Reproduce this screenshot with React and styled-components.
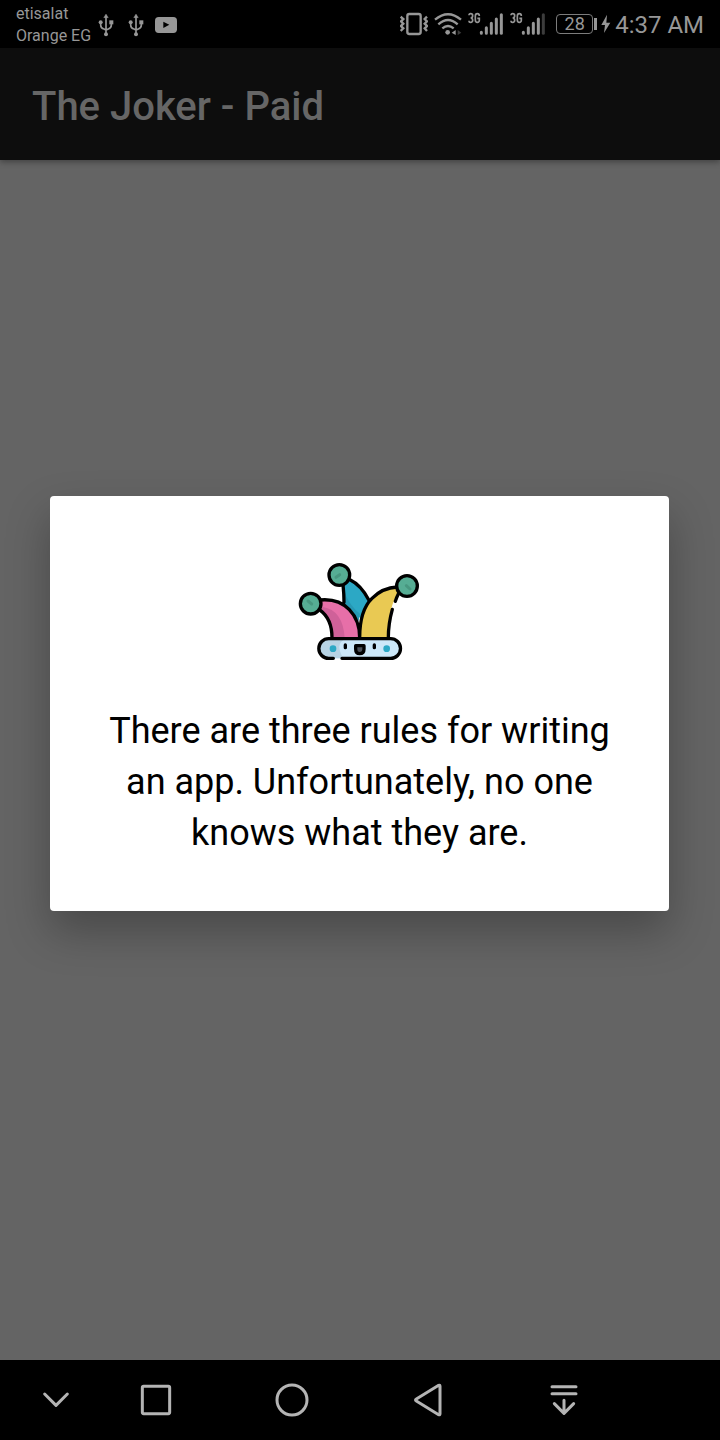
import React from "react";
import styled, { createGlobalStyle } from "styled-components";

const GlobalStyle = createGlobalStyle`
  * { box-sizing: border-box; }
  body { margin: 0; background: #646464; font-family: Roboto, "Noto Sans", sans-serif; }
`;

const Screen = styled.div`
  position: relative;
  display: flex;
  flex-direction: column;
  min-height: 100vh;
  background: #646464;
`;

const StatusBar = styled.div`
  display: flex;
  justify-content: space-between;
  height: 48px;
  padding: 0 16px;
  background: #000;
  color: #979797;
`;

const StatusGroup = styled.div`
  display: flex;
  align-items: center;
  gap: ${(p) => p.$gap}px;
`;

const Notifications = styled(StatusGroup)`
  padding-top: 2px;
`;

const Carriers = styled.div`
  font-size: 16px;
  line-height: 22px;
  white-space: nowrap;
`;

const Signals = styled(StatusGroup)`
  margin-right: 6px;
`;

const Battery = styled.span`
  display: flex;
  align-items: center;
`;

const BatteryCell = styled.span`
  width: 37px;
  height: 20px;
  border: 1px solid #7c7c7c;
  border-radius: 4px;
  font-size: 18px;
  line-height: 18px;
  text-align: center;
`;

const BatteryTip = styled.span`
  width: 3px;
  height: 12px;
  margin-left: 1px;
  background: #979797;
`;

const Clock = styled.time`
  font-size: 24px;
  line-height: 48px;
  padding-top: 2px;
  white-space: nowrap;
`;

const AppBar = styled.header`
  display: flex;
  align-items: center;
  height: 112px;
  padding: 6px 32px 0;
  background: #0d0d0d;
  box-shadow: 0 2px 6px rgba(0, 0, 0, 0.35);
`;

const Title = styled.h1`
  margin: 0;
  font-size: 40px;
  line-height: 48px;
  font-weight: 500;
  color: #666;
`;

const Content = styled.main`
  flex: 1;
`;

const Overlay = styled.div`
  position: absolute;
  inset: 48px 0 80px;
  display: flex;
  align-items: center;
  padding: 0 51px 2px 50px;
`;

const Dialog = styled.section`
  display: flex;
  flex-direction: column;
  align-items: center;
  gap: 36px;
  width: 100%;
  padding: 54px 40px 52px;
  border-radius: 4px;
  background: #fff;
  box-shadow: 0 20px 44px rgba(0, 0, 0, 0.28);
`;

const Joke = styled.p`
  margin: 0;
  font-size: 36px;
  line-height: 51px;
  text-align: center;
  color: #000;
`;

const NavBar = styled.nav`
  display: grid;
  grid-template-columns: 88px repeat(4, 1fr) 88px;
  height: 80px;
  background: #000;
`;

const NavButton = styled.button`
  display: flex;
  align-items: center;
  justify-content: center;
  padding: 0 0 0 ${(p) => (p.$edge ? 24 : 0)}px;
  border: 0;
  background: none;
  color: #b4b4b4;
`;

const UsbIcon = () => (
  <svg width="22" height="24" viewBox="285 38 66 72" fill="#979797" stroke="#979797" aria-hidden="true">
    <path d="M318 48V102M302 68V74Q302 84 312 86L318 89L325 86Q334 83 334 74V68" fill="none" stroke="#979797" strokeWidth="5" />
    <path d="M318 41L325 52H311Z" strokeWidth="1" />
    <circle cx="318" cy="102" r="6" stroke="none" />
    <circle cx="302" cy="66" r="6" stroke="none" />
    <rect x="328" y="60" width="12" height="12" stroke="none" />
  </svg>
);

const VideoIcon = () => (
  <svg width="22" height="16" viewBox="0 0 66 48" aria-hidden="true">
    <rect width="66" height="48" rx="11" fill="#979797" />
    <path d="M25 14L43 23L25 33Z" fill="#000" />
  </svg>
);

const VibrateIcon = () => (
  <svg width="28" height="24" viewBox="27 36 84 72" fill="none" stroke="#979797" aria-hidden="true">
    <rect x="49" y="42" width="40" height="60" rx="6" strokeWidth="7" />
    <path d="M29 50L37 57L30 64L37 71L30 78L37 85L29 93M108 50L101 57L108 64L101 71L108 78L101 85L108 93" strokeWidth="7" />
  </svg>
);

const WifiIcon = () => (
  <svg width="28" height="24" viewBox="129 36 84 72" fill="none" stroke="#979797" strokeWidth="7" aria-hidden="true">
    <path d="M132 59Q171 26 210 59M142 73Q171 47 200 73M154 85Q171 71 188 85" />
    <circle cx="170" cy="97" r="7" fill="#979797" stroke="none" />
    <path d="M182 98L194 90V105Z" fill="#979797" stroke="none" />
    <path d="M200 90L211 98L200 105Z" fill="#3c3c3c" stroke="none" />
  </svg>
);

const SignalIcon = ({ last = "#979797" }) => (
  <svg width="36" height="24" viewBox="231 36 108 72" fill="none" stroke="#979797" aria-hidden="true">
    <path d="M234 46Q234 41 239 41Q245 41 245 47Q245 53 239 54Q245 54 245 61Q245 67 239 67Q234 67 234 62M265 48Q265 41 259 41Q253 41 253 48V60Q253 67 259 67Q265 67 265 61V55H259" strokeWidth="5" />
    <g strokeWidth="9" strokeLinecap="round">
      <path d="M271 97V100M286 83V100M301 70V100M316 57V100" />
      <path d="M331 44V100" stroke={last} />
    </g>
  </svg>
);

const BoltIcon = () => (
  <svg width="10" height="20" viewBox="151 42 30 60" fill="#979797" aria-hidden="true">
    <path d="M169 44L152 75H163L160 99L179 68H167Z" />
  </svg>
);

const JesterHat = () => (
  <svg width="140" height="120" viewBox="0 0 420 360" fill="none" role="img" aria-label="Jester hat">
    <path d="M160 99L181 90Q214 108 237 151L214 207L159 159Z" fill="#2ca8c5" />
    <path d="M162 126Q184 174 210 191L206 213L159 159Z" fill="#2698b5" />
    <path d="M91 150Q144 145 178 179Q209 211 209 265H126Q128 205 91 180Z" fill="#e76fa8" />
    <path d="M98 171Q159 180 164 265H126Q128 205 91 180Z" fill="#cf6199" />
    <path d="M209 265Q211 180 245 145Q276 113 325 111L329 126Q296 158 294 265Z" fill="#e9c953" />
    <g stroke="#000" strokeWidth="10" strokeLinecap="round" strokeLinejoin="round">
      <path d="M159 103Q162 132 162 157M180 89Q213 105 236 149M91 150Q145 145 178 179Q209 211 209 263M91 181Q126 207 126 263M209 263Q209 181 246 145Q278 113 322 111M326 130Q320 142 316 154M307 178Q295 221 295 263" />
      <circle cx="148" cy="75" r="31" fill="#56ad94" />
      <circle cx="62" cy="161" r="31" fill="#56ad94" />
      <circle cx="351" cy="108" r="31" fill="#56ad94" />
    </g>
    <path d="M138 82L149 74M54 153L65 162M349 107L360 117" stroke="#489780" strokeWidth="9" strokeLinecap="round" />
    <rect x="87" y="266" width="245" height="59" rx="29" fill="#cce7f8" />
    <path d="M116 266H166Q148 275 148 290Q148 305 160 325H116Q87 325 87 296Q87 266 116 266Z" fill="#b7d3e4" />
    <path d="M130 325H116A29 29 0 0 1 116 266H302A29 29 0 0 1 302 325H156" stroke="#000" strokeWidth="10" strokeLinecap="round" />
    <circle cx="129" cy="296" r="10" fill="#2ca8c5" />
    <circle cx="290" cy="296" r="10" fill="#2ca8c5" />
    <path d="M166 285V293M253 285V293" stroke="#000" strokeWidth="10" strokeLinecap="round" />
    <path d="M197 287H222V297Q222 311 209 311Q197 311 197 297Z" fill="#4b5058" stroke="#000" strokeWidth="10" strokeLinejoin="round" />
  </svg>
);

const NavIcon = ({ children }) => (
  <svg width="40" height="40" viewBox="0 0 120 120" fill="none" stroke="currentColor" strokeWidth="9" strokeLinecap="round" strokeLinejoin="round" aria-hidden="true">
    {children}
  </svg>
);

const navItems = [
  { label: "Hide navigation", edge: true, icon: <path d="M26 42L60 76L94 42" /> },
  { label: "Recent apps", icon: <rect x="19" y="19" width="82" height="82" rx="4" /> },
  { label: "Home", icon: <circle cx="60" cy="60" r="45" /> },
  { label: "Back", icon: <path d="M25 57L92 16Q96 14 96 19V101Q96 106 92 104L25 63Q20 60 25 57Z" /> },
  { label: "Notifications", icon: <path d="M24 20H96M24 41H96M60 61V98M31 71L60 100L89 71" /> },
];

export default function App() {
  return (
    <>
      <GlobalStyle />
      <Screen>
        <StatusBar>
          <Notifications $gap={4}>
            <Carriers>
              <div>etisalat</div>
              <div>Orange EG</div>
            </Carriers>
            <StatusGroup $gap={8}>
              <UsbIcon />
              <UsbIcon />
              <VideoIcon />
            </StatusGroup>
          </Notifications>
          <StatusGroup $gap={4}>
            <Signals $gap={6}>
              <VibrateIcon />
              <WifiIcon />
              <SignalIcon />
              <SignalIcon last="#3c3c3c" />
            </Signals>
            <Battery>
              <BatteryCell>28</BatteryCell>
              <BatteryTip />
            </Battery>
            <BoltIcon />
            <Clock>4:37 AM</Clock>
          </StatusGroup>
        </StatusBar>
        <AppBar>
          <Title>The Joker - Paid</Title>
        </AppBar>
        <Content />
        <Overlay>
          <Dialog role="dialog" aria-modal="true" aria-describedby="joke">
            <JesterHat />
            <Joke id="joke">
              There are three rules for writing an app. Unfortunately, no one knows what they are.
            </Joke>
          </Dialog>
        </Overlay>
        <NavBar>
          {navItems.map((item) => (
            <NavButton key={item.label} type="button" aria-label={item.label} $edge={item.edge}>
              <NavIcon>{item.icon}</NavIcon>
            </NavButton>
          ))}
        </NavBar>
      </Screen>
    </>
  );
}
